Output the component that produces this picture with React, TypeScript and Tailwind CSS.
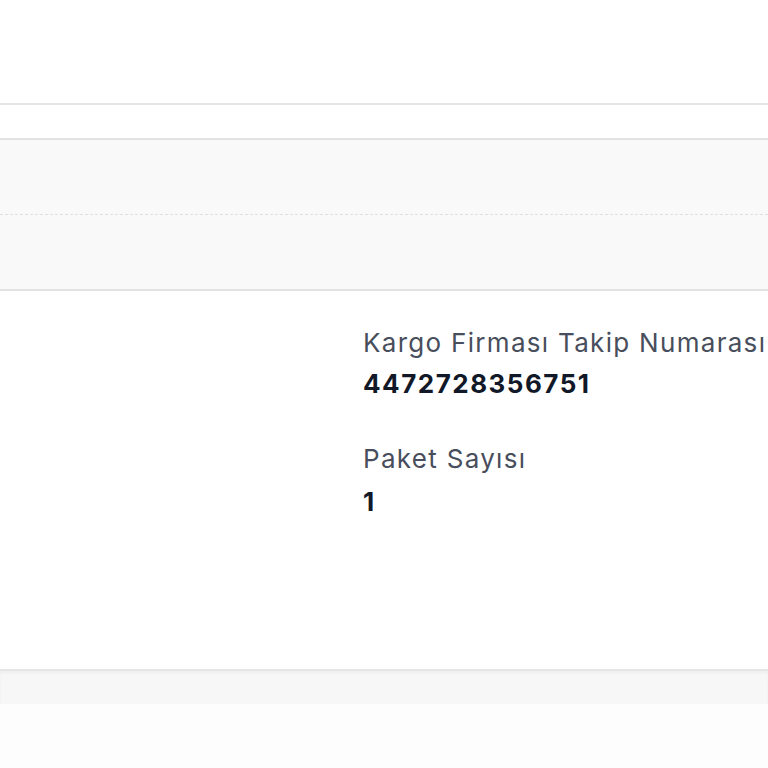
export default function App() {
  const font = { fontFamily: 'Inter, "Noto Sans", sans-serif' };
  return (
    <div className="min-h-[768px] w-[768px] bg-white overflow-hidden" style={font}>
      {/* top spacer */}
      <div className="h-[103px] bg-white" />
      <div className="h-[35px] border-t-2 border-[#e4e4e4] bg-white" />

      {/* grey header block */}
      <div className="border-t-2 border-b-2 border-[#e2e2e2] bg-[#f9f9f9]">
        <div className="h-[75px] border-b border-dashed border-[#e0e0e0]" />
        <div className="h-[74px]" />
      </div>

      {/* details */}
      <div className="flex h-[378px] pt-[36px]">
        <div className="w-[363px] shrink-0" />
        <div className="flex flex-col whitespace-nowrap">
          <div className="text-[26px] leading-[32px] tracking-[1.3px] text-[#484e5b]">Kargo Firması Takip Numarası</div>
          <div className="mt-[9px] text-[26px] leading-[32px] tracking-[1.5px] font-bold text-[#111827]">4472728356751</div>
          <div className="mt-[43px] text-[26px] leading-[32px] tracking-[1.3px] text-[#484e5b]">Paket Sayısı</div>
          <div className="mt-[11px] text-[26px] leading-[32px] font-bold text-[#111827]">1</div>
        </div>
      </div>

      {/* footer strip */}
      <div className="h-[35px] border-t-2 border-[#e6e6e6] bg-[#f7f7f7] shadow-[inset_0_2px_3px_rgba(0,0,0,0.04)]" />
      <div className="h-[64px] bg-[#fdfdfd]" />
    </div>
  );
}
